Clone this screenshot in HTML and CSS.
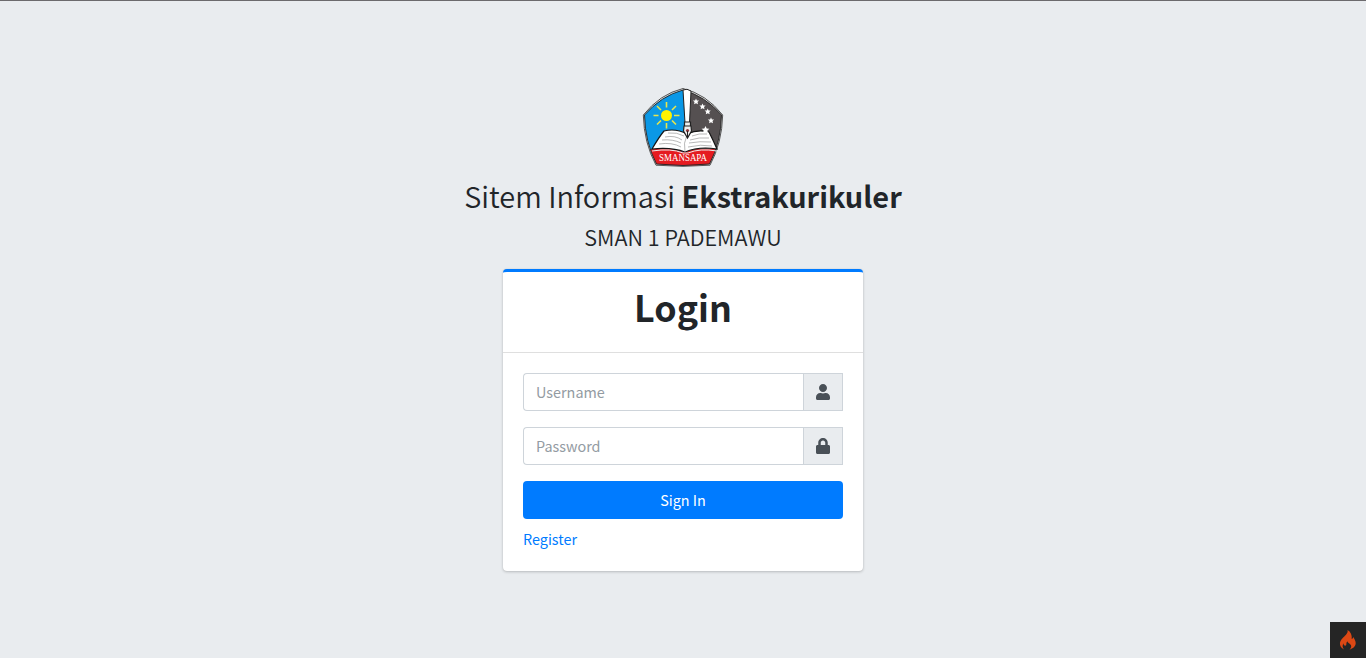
FILE: index.html
```html
<!DOCTYPE html>
<html lang="id">
<head>
<meta charset="utf-8">
<title>Login</title>
<link rel="stylesheet" href="styles.css">
</head>
<body>
<main class="login-page">
  <header class="login-logo">
    <svg class="crest" viewBox="0 0 90 90" role="img" aria-label="SMANSAPA">
      <defs>
        <clipPath id="shield"><path d="M45 8Q67 14 83.500 33Q83 60 71.500 82Q45 85 18.500 82Q7 60 6.500 33Q23 14 45 8Z"/></clipPath>
      </defs>
      <path d="M45 6.500Q68 12 84.700 33Q84 61 72 83.200Q45 85.500 18 83.200Q6 61 5.300 33Q22 12 45 6.500Z" fill="#ddd" stroke="#444" stroke-width=".9"/>
      <g clip-path="url(#shield)">
        <path d="M0 0H48V90H0Z" fill="#0b98e6"/>
        <path d="M48 0H90V90H48Z" fill="#555051"/>
        <path d="M5 68L17 67Q34 65 45 70Q60 65 85 68V90H5Z" fill="#e51b20"/>
      </g>
      <path d="M45 8Q67 14 83.500 33Q83 60 71.500 82Q45 85 18.500 82Q7 60 6.500 33Q23 14 45 8Z" fill="none" stroke="#222" stroke-width=".9"/>
      <path d="M28.500 20v5.500M28.500 41v5.500M15.500 33.500h5M36 33.500h5.500M19 24l4 4M34 38.500l4 4M19 42.500l4-4M34 28l4-4" stroke="#e9e64b" stroke-width="1.600"/>
      <circle cx="28.500" cy="33.500" r="5.500" fill="#fff200"/>
      <path d="M14 67Q21 55 26 49Q38 46 49 52Q60 47 71 50Q75 58 79 67Q61 64 47 70Q34 65 14 67Z" fill="#fff" stroke="#151515" stroke-width="1.200"/>
      <path d="M14 69Q33 66 45 71H50Q62 66 79 69" fill="none" stroke="#eee" stroke-width="1"/>
      <path d="M49 53Q45 61 47 70M30 51Q39 50 46 54M27 55Q37 53 44 58M24 58Q35 57 43 61M21 62Q34 60 43 65M54 54Q61 51 69 52M52 58Q61 55 71 56M51 61Q62 59 73 60M50 65Q63 62 74 64" fill="none" stroke="#888" stroke-width=".6"/>
      <path d="M45 8Q49 6 53 9L51.500 41H47Z" fill="#fff" stroke="#222" stroke-width="1"/>
      <path d="M46.500 40H52.500V44H46.500ZM46 44H53L53.500 49L49.500 56L45.500 49Z" fill="#eee" stroke="#222" stroke-width="1.200"/>
      <circle cx="49.500" cy="48.500" r="1.600" fill="#8d3438"/>
      <path d="M49.500 49V55" stroke="#222" stroke-width="1"/>
      <g fill="#fff">
        <path id="star" d="M58 16.500l.9 1.900 2.200.2-1.600 1.500.5 2.200-2-1-1.900 1 .4-2.200-1.600-1.500 2.200-.2Z"/>
        <use href="#star" x="6.500" y="5"/>
        <use href="#star" x="11.700" y="10"/>
        <use href="#star" x="15" y="19"/>
        <path d="M67.500 44l1.200 2.400 2.700.3-2 1.800.6 2.700-2.500-1.300-2.400 1.300.5-2.700-2-1.800 2.700-.3Z"/>
      </g>
      <text class="motto" x="21" y="79" textLength="48" lengthAdjust="spacingAndGlyphs">SMANSAPA</text>
    </svg>
    <h1 class="brand">Sitem Informasi <b>Ekstrakurikuler</b></h1>
    <p class="school">SMAN 1 PADEMAWU</p>
  </header>
  <section class="card">
    <h2 class="card-header">Login</h2>
    <form class="card-body">
      <div class="input-group">
        <input class="form-control" type="text" placeholder="Username">
        <span class="addon"><svg width="14" height="16" viewBox="0 0 448 512" fill="currentColor"><path d="M224 256c70.700 0 128-57.300 128-128S294.700 0 224 0 96 57.300 96 128s57.300 128 128 128zm89.600 32h-16.700c-22.200 10.200-46.900 16-72.900 16s-50.600-5.800-72.900-16h-16.700C60.200 288 0 348.200 0 422.400V464c0 26.500 21.500 48 48 48h352c26.500 0 48-21.500 48-48v-41.600c0-74.200-60.200-134.400-134.400-134.400z"/></svg></span>
      </div>
      <div class="input-group">
        <input class="form-control" type="password" placeholder="Password">
        <span class="addon"><svg width="14" height="16" viewBox="0 0 448 512" fill="currentColor"><path d="M400 224h-24v-72C376 68.200 307.800 0 224 0S72 68.200 72 152v72H48c-26.500 0-48 21.500-48 48v192c0 26.500 21.500 48 48 48h352c26.500 0 48-21.500 48-48V272c0-26.500-21.500-48-48-48zm-104 0H152v-72c0-39.700 32.300-72 72-72s72 32.300 72 72v72z"/></svg></span>
      </div>
      <button class="btn" type="button">Sign In</button>
      <a class="register" href="#">Register</a>
    </form>
  </section>
</main>
<a class="debug-icon" href="#" aria-label="Debug"><svg width="18" height="20" viewBox="0 0 18 20"><path d="M8.500 0C9.400 3.200 6.500 5 4.200 7.600C1.800 10.200.5 12 1 14.600C1.400 17 3 18.600 5 19.500C3.500 17.700 3 15.500 4.500 13.300C4.500 15 5.400 15.800 6.500 15.600C8.200 15.200 6.500 12.900 8.500 11.200C8.500 13.300 12.200 13.500 12.200 16.200C12.200 17.700 11.300 18.700 10.400 19.500C14 18.700 16.700 16.300 16.700 13C16.700 10.300 15 8.700 14.400 6.900C13.900 8 13.700 8.600 12.700 9C13.200 5 11.700 1.800 8.500 0Z" fill="#dd4814"/></svg></a>
</body>
</html>
```
FILE: styles.css
```css
* { box-sizing: border-box; }
body {
  margin: 0;
  color: #212529;
  background: #e9ecef;
  font-family: "Noto Sans CJK SC", "Noto Sans", sans-serif;
  font-size: 14.4px;
  line-height: 24px;
}
.login-page {
  display: flex;
  flex-direction: column;
  align-items: center;
  height: 658px;
  padding-top: 81px;
  border-top: 1px solid #6c6a6d;
}
.login-logo {
  display: flex;
  flex-direction: column;
  align-items: center;
  height: 187px;
}
.crest { width: 90px; height: 90px; }
.motto {
  fill: #fff;
  font: 11px "Liberation Serif", serif;
}
.brand {
  margin: 0 0 2px;
  font-size: 28.9px;
  font-weight: 350;
  line-height: 46px;
  white-space: nowrap;
}
.brand b { font-weight: 700; }
.school {
  margin: 0;
  font-size: 21.6px;
  font-weight: 350;
  line-height: 33px;
}
.card {
  width: 360px;
  height: 302px;
  background: #fff;
  border-top: 3px solid #007bff;
  border-radius: 4px;
  box-shadow: 0 0 1px rgba(0,0,0,.125), 0 1px 3px rgba(0,0,0,.2);
}
.card-header {
  height: 81px;
  margin: 0;
  padding-top: 10px;
  border-bottom: 1px solid rgba(0,0,0,.125);
  font-size: 35.8px;
  font-weight: 700;
  line-height: 48px;
  text-align: center;
}
.card-body {
  display: flex;
  flex-direction: column;
  padding: 20px;
}
.input-group {
  display: flex;
  height: 38px;
  margin-bottom: 16px;
}
.form-control {
  flex: 1;
  min-width: 0;
  padding: 0 12px;
  border: 1px solid #ced4da;
  border-right: 0;
  border-radius: 4px 0 0 4px;
  background: #fff;
  font: inherit;
}
.form-control::placeholder { color: #939ba2; opacity: 1; }
.addon {
  display: flex;
  align-items: center;
  justify-content: center;
  width: 40px;
  border: 1px solid #ced4da;
  background: #e9ecef;
  color: #495057;
}
.btn {
  height: 38px;
  padding: 0;
  border: 0;
  border-radius: 4px;
  background: #007bff;
  color: #fff;
  font: inherit;
}
.register {
  align-self: flex-start;
  margin-top: 8px;
  color: #007bff;
  text-decoration: none;
}
.debug-icon {
  position: fixed;
  right: 0;
  bottom: 0;
  display: flex;
  align-items: center;
  justify-content: center;
  width: 36px;
  height: 36px;
  background: #252525;
}
```
